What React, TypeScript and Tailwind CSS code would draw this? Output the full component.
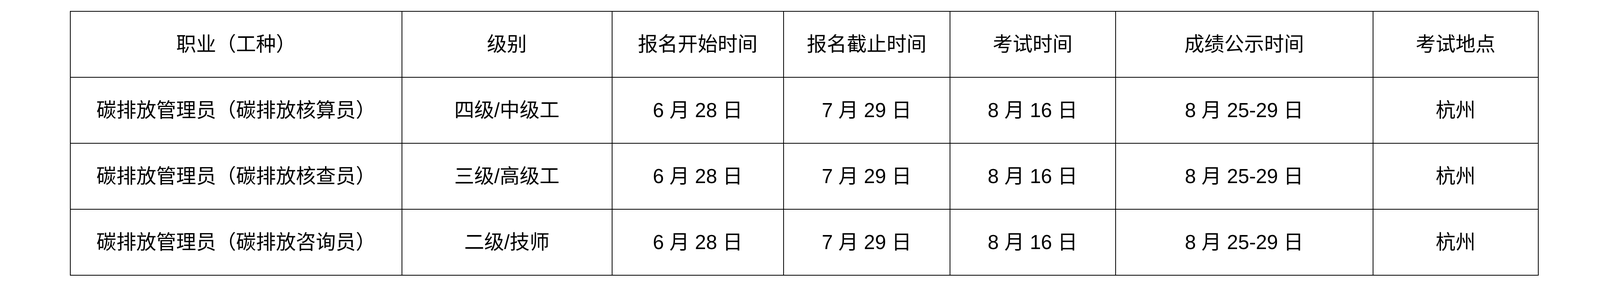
const columns = [
  { title: "职业（工种）", width: "w-[22.59%]" },
  { title: "级别", width: "w-[14.31%]" },
  { title: "报名开始时间", width: "w-[11.69%]" },
  { title: "报名截止时间", width: "w-[11.33%]" },
  { title: "考试时间", width: "w-[11.28%]" },
  { title: "成绩公示时间", width: "w-[17.54%]" },
  { title: "考试地点", width: "w-[11.26%]" }
];

const rows = [
  ["碳排放管理员（碳排放核算员）", "四级/中级工", "6 月 28 日", "7 月 29 日", "8 月 16 日", "8 月 25-29 日", "杭州"],
  ["碳排放管理员（碳排放核查员）", "三级/高级工", "6 月 28 日", "7 月 29 日", "8 月 16 日", "8 月 25-29 日", "杭州"],
  ["碳排放管理员（碳排放咨询员）", "二级/技师", "6 月 28 日", "7 月 29 日", "8 月 16 日", "8 月 25-29 日", "杭州"]
];

export default function App() {
  return (
    <div className="min-h-[730px] w-full bg-white pt-[28px] font-['Liberation_Sans','Noto_Sans_CJK_SC',sans-serif] text-black">
      <table className="ml-[4.365%] w-[91.8%] table-fixed border-collapse border-2 border-black text-[1.247vw] leading-none">
        <colgroup>
          {columns.map((c) => (
            <col key={c.title} className={c.width} />
          ))}
        </colgroup>
        <thead>
          <tr className="h-[169px]">
            {columns.map((c) => (
              <th key={c.title} className="border-2 border-black p-0 text-center align-middle font-normal">
                {c.title}
              </th>
            ))}
          </tr>
        </thead>
        <tbody>
          {rows.map((row, i) => (
            <tr key={i} className="h-[169px]">
              {row.map((cell, j) => (
                <td key={j} className="border-2 border-black p-0 text-center align-middle">
                  {cell}
                </td>
              ))}
            </tr>
          ))}
        </tbody>
      </table>
    </div>
  );
}
